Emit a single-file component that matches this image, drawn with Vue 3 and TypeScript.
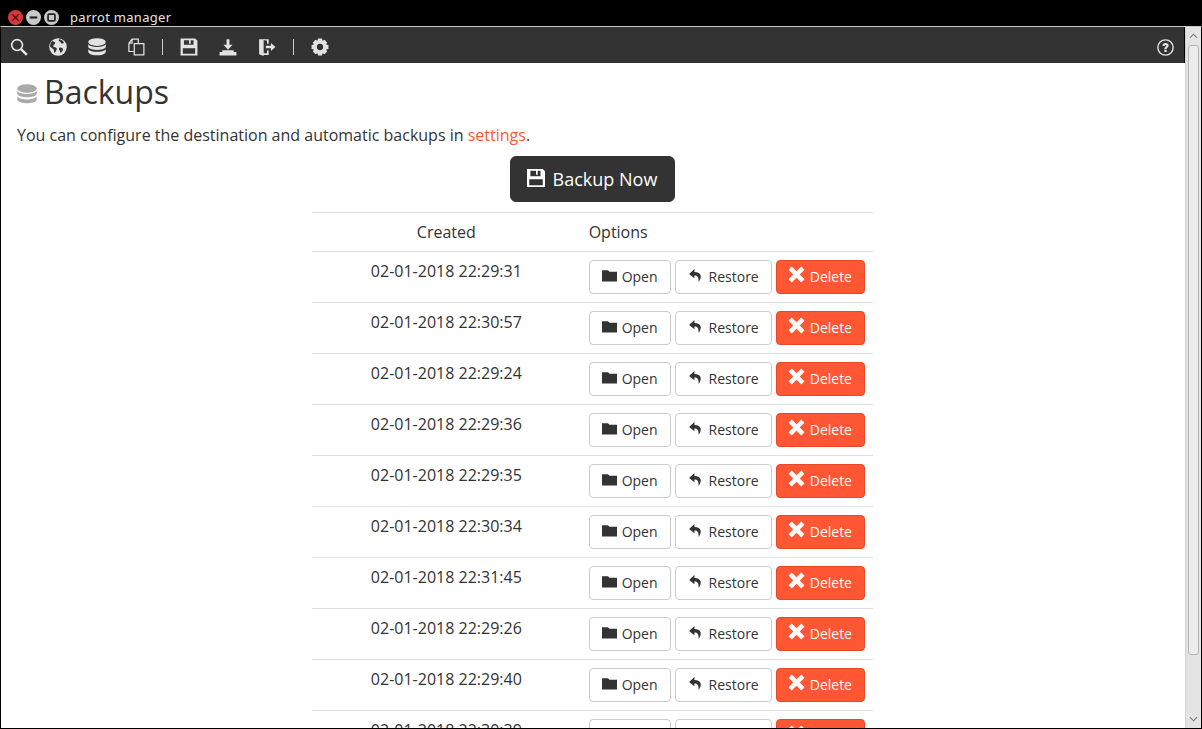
<template>
  <div class="window">
    <div class="titlebar">
      <span class="wbtn close">
        <svg viewBox="0 0 14 14"><path d="M4 4l6 6M10 4l-6 6" stroke="#5a1010" stroke-width="1.4"/></svg>
      </span>
      <span class="wbtn">
        <svg viewBox="0 0 14 14"><path d="M3.5 7h7" stroke="#222" stroke-width="2"/></svg>
      </span>
      <span class="wbtn">
        <svg viewBox="0 0 14 14"><rect x="3.8" y="3.8" width="6.4" height="6.4" rx="1" fill="none" stroke="#222" stroke-width="1.6"/></svg>
      </span>
      <span class="wtitle">parrot manager</span>
    </div>

    <div class="frame">
      <div class="toolbar">
        <!-- search -->
        <svg class="ti" viewBox="0 0 16 16"><circle cx="6.3" cy="6.3" r="4.8" fill="none" stroke="currentColor" stroke-width="1.5"/><path d="M9.800 9.800l5.200 5.200" stroke="currentColor" stroke-width="2.200"/></svg>
        <!-- globe -->
        <svg class="ti" viewBox="0 0 16 16"><circle cx="8" cy="8" r="7.8" fill="currentColor"/><path d="M3 2.600C1.400 4 .8 6 1 8c1 .2 1.600 1.200 2.600 1.800.8.500 1 1.700.9 3 1 .6 1 .2 1.500-1 .5-1 1.400-1.800.8-2.800C6 8 4.500 8.200 3.800 7.500 3.300 6.800 4.500 6 5.200 5 5.800 4.100 5.300 3.300 4.500 3.400zM9 1.200c-.6.800-.4 1.600.6 2 1 .3.700 1.300 1.300 1.700.8.300 1.700-.2 2.400-1C12.300 2.300 10.800 1.300 9 1.200zM9.500 8.500c-.8.400-1 1.500-.2 2.200.5.700.2 1.700.9 2.300 1-.3 2-1.500 2.300-3-.3-1-1.800-1.900-3-1.500z" fill="#333"/></svg>
        <!-- database -->
        <svg class="ti" viewBox="0 0 16 16"><use href="#db-shape"/></svg>
        <!-- copy -->
        <svg class="ti" viewBox="-1 0 16 16"><path d="M0.700 4.500L3.500 1H9V5M0.700 4.500V12H5.500M0.700 4.500H3.500V1" fill="none" stroke="currentColor" stroke-width="1.100"/><path d="M5.500 5H14V15H5.500z" fill="#333" stroke="currentColor" stroke-width="1.100"/></svg>
        <span class="sep"></span>
        <!-- save -->
        <svg class="ti" viewBox="0 0 16 16"><path d="M0.500 0.500H13.500L15.500 2.500V15.500H0.500zM3.500 2V6H12V2H9.500V5H8V2zM2.500 9V14H13.500V9z" fill="currentColor" fill-rule="evenodd"/></svg>
        <!-- download -->
        <svg class="ti" viewBox="0 0 16 16"><path d="M6.700 1H9.300V6H12L8 10.500 4 6H6.700zM3 10.800H13V12.500H15.500V15.500H0.500V12.500H3z" fill="currentColor"/></svg>
        <!-- logout -->
        <svg class="ti" viewBox="0 0 16 16"><path d="M1 1H9.500V5H8V2.500L5 1.800V13.500H8V11H9.500V15H5V16L1 14.500z" fill="currentColor"/><path d="M7 6.800H11.500V4.500L15.500 8 11.500 11.500V9.200H7z" fill="currentColor"/></svg>
        <span class="sep"></span>
        <!-- cog -->
        <svg class="ti" viewBox="0 0 16 16"><path d="M6.300 0.500H9.700L10.200 2.500 12 1.500 14.400 4 13.400 5.700 15.500 6.300V9.700L13.400 10.300 14.400 12 12 14.500 10.200 13.500 9.700 15.500H6.300L5.800 13.500 4 14.500 1.600 12 2.600 10.300 0.500 9.700V6.300L2.600 5.700 1.600 4 4 1.500 5.800 2.500zM8 5.200A2.800 2.800 0 1 0 8 10.800 2.800 2.800 0 1 0 8 5.200z" fill="currentColor" fill-rule="evenodd"/></svg>
        <span class="grow"></span>
        <!-- help -->
        <svg class="help" viewBox="0 0 16 16"><circle cx="8" cy="8" r="7.200" fill="none" stroke="currentColor" stroke-width="1.300"/><path d="M5 6.300C5.100 4.500 6.400 3.700 8 3.700 9.800 3.700 11 4.700 11 6.200 11 8 9.100 8 9.100 9.600H6.900C6.900 7.300 8.800 7.300 8.800 6.400 8.800 6 8.500 5.700 8 5.700 7.500 5.700 7.200 6 7.100 6.600zM6.900 10.300H9.100V12.300H6.900z" fill="currentColor"/></svg>
      </div>

      <div class="viewport">
        <div class="content">
          <h1 class="heading">
            <svg class="h-icon" viewBox="0 0 16 16"><use href="#db-shape"/></svg>
            Backups
          </h1>
          <p class="intro">You can configure the destination and automatic backups in <a class="link">settings</a>.</p>
          <div class="action">
            <button class="btn-lg">
              <svg class="lg-icon" viewBox="0 0 16 16"><path d="M0 0H14L16 2V16H0zM3 1.500V6.500H12V1.500H9.500V5H8V1.500zM2 9V14.500H14V9z" fill="currentColor" fill-rule="evenodd"/></svg>
              Backup Now
            </button>
          </div>
          <table class="table">
            <thead>
              <tr>
                <th class="c-created">Created</th>
                <th class="c-options">Options</th>
              </tr>
            </thead>
            <tbody>
              <tr v-for="d in backups" :key="d">
                <td class="c-created">{{ d }}</td>
                <td class="c-options">
                  <div class="btns">
                    <button class="btn open">
                      <svg class="bi" viewBox="0 0 14 14"><path d="M0 2H5.500L7 3.500H14V12.500H0z" fill="currentColor"/></svg>
                      Open
                    </button>
                    <button class="btn">
                      <svg class="bi" viewBox="0 0 14 14"><path d="M6 1L1 5.500 6 9.500V7C9 7 10 8.500 10 13 13 9 13 3.800 6 3.800z" fill="currentColor"/></svg>
                      Restore
                    </button>
                    <button class="btn danger">
                      <svg class="bi x" viewBox="0 0 16 16"><path d="M3.500 .5L8 5 12.500 .5 15.500 3.500 11 8 15.500 12.500 12.500 15.500 8 11 3.500 15.500 .5 12.500 5 8 .5 3.500z" fill="currentColor"/></svg>
                      Delete
                    </button>
                  </div>
                </td>
              </tr>
            </tbody>
          </table>
        </div>
        <div class="scrollbar">
          <svg class="arrow" viewBox="0 0 10 6"><path d="M1 5l4-4 4 4" fill="none" stroke="#777" stroke-width="1.200"/></svg>
          <div class="thumb"></div>
          <span class="grow"></span>
          <svg class="arrow" viewBox="0 0 10 6"><path d="M1 1l4 4 4-4" fill="none" stroke="#777" stroke-width="1.200"/></svg>
        </div>
      </div>
    </div>

    <svg class="defs" width="0" height="0">
      <defs>
        <g id="db-shape" fill="currentColor">
          <ellipse cx="8" cy="3.600" rx="7.800" ry="3.400"/>
          <path d="M0.200 5.600C1.500 7.400 4.500 8 8 8S14.500 7.400 15.800 5.600V8.200C14.500 10 11.500 10.600 8 10.600S1.500 10 0.200 8.200z"/>
          <path d="M0.200 10C1.500 11.800 4.500 12.300 8 12.300S14.500 11.800 15.800 10V12.600C14.500 14.800 11.500 15.400 8 15.400S1.500 14.800 0.200 12.600z"/>
        </g>
      </defs>
    </svg>
  </div>
</template>

<script setup lang="ts">
const backups: string[] = [
  '02-01-2018 22:29:31',
  '02-01-2018 22:30:57',
  '02-01-2018 22:29:24',
  '02-01-2018 22:29:36',
  '02-01-2018 22:29:35',
  '02-01-2018 22:30:34',
  '02-01-2018 22:31:45',
  '02-01-2018 22:29:26',
  '02-01-2018 22:29:40',
  '02-01-2018 22:30:39',
]
</script>

<style>
html, body { margin: 0; overflow: hidden; background: #000; }
</style>

<style scoped>
.window {
  width: 1202px;
  height: 729px;
  background: #000;
  display: flex;
  flex-direction: column;
  font-family: "Open Sans", "Liberation Sans", sans-serif;
  color: #333;
  overflow: hidden;
}

.titlebar {
  height: 26px;
  flex-shrink: 0;
  display: flex;
  align-items: center;
  padding: 8px 0 0 8px;
  box-sizing: border-box;
  gap: 3px;
}
.wbtn {
  width: 15px;
  height: 15px;
  border-radius: 50%;
  background: #c8c8c8;
  display: block;
}
.wbtn svg { display: block; width: 15px; height: 15px; }
.wbtn.close { background: #d8383c; }
.wtitle {
  margin-left: 8px;
  color: #e4e4e4;
  font-size: 13px;
  font-family: "Noto Sans", "Open Sans", sans-serif;
  letter-spacing: 0.3px;
}

.frame {
  flex: 1;
  min-height: 0;
  display: flex;
  flex-direction: column;
  border-top: 1px solid #c9c9c9;
  border-left: 1px solid #000;
  border-bottom: 1px solid #000;
  border-right: 1px solid #000;
}

.toolbar {
  height: 36px;
  flex-shrink: 0;
  box-sizing: border-box;
  background: #333;
  color: #e3e3e3;
  display: flex;
  align-items: center;
  padding: 4px 10px 0 9px;
  gap: 21px;
  margin-right: 17px;
}
.ti { width: 18px; height: 18px; flex-shrink: 0; }
.sep { width: 1px; height: 16px; background: #ccc; margin: 0 -4px; }
.grow { flex: 1; }
.help { width: 17px; height: 17px; }

.viewport {
  flex: 1;
  min-height: 0;
  display: flex;
}
.content {
  flex: 1;
  min-width: 0;
  background: #fff;
  overflow: hidden;
  padding: 0 16px;
}

.heading {
  margin: 9px 0 0;
  font-size: 32px;
  font-weight: 400;
  line-height: 40px;
  color: #333;
  display: flex;
  align-items: center;
  gap: 7px;
}
.h-icon { width: 20px; height: 20px; color: #a9a9a9; margin-top: 3px; }

.intro { margin: 12px 0 0; font-size: 16px; line-height: 23px; }
.link { color: #ff5733; }

.action {
  display: flex;
  justify-content: center;
  margin-top: 9px;
  padding-right: 2px;
}
.btn-lg {
  height: 46px;
  width: 165px;
  padding: 0;
  background: #333;
  color: #fff;
  border: 1px solid #333;
  border-radius: 6px;
  font: 18px "Open Sans", sans-serif;
  display: flex;
  align-items: center;
  justify-content: center;
  gap: 8px;
}
.lg-icon { width: 18px; height: 18px; margin-top: -3px; }

.table {
  width: 561px;
  margin: 10px 0 0 295px;
  border-collapse: collapse;
  font-size: 16px;
  line-height: 22px;
}
.table th, .table td {
  border-top: 1px solid #ddd;
  padding: 8px;
  font-weight: 400;
  vertical-align: top;
}
.c-created { text-align: center; }
.c-options { text-align: left; }
.table th.c-created, .table td.c-created { width: 253px; }
.table th.c-options, .table td.c-options { width: 276px; }

.btns { display: flex; gap: 4px; }
.btn {
  height: 34px;
  box-sizing: border-box;
  background: #fff;
  color: #333;
  border: 1px solid #ccc;
  border-radius: 4px;
  padding: 0 12px 2px;
  font: 14px "Open Sans", sans-serif;
  display: flex;
  align-items: center;
  gap: 6px;
}
.btn.open { gap: 5px; }
.bi { width: 15px; height: 15px; margin-top: -2px; }
.bi.x { width: 17px; height: 17px; margin: -3px -1px 0 -1px; }
.danger { background: #ff5733; border-color: #e8482a; color: #fff; }

.scrollbar {
  width: 16px;
  flex-shrink: 0;
  margin-top: -36px;
  background: #e4e4e4;
  border-left: 1px solid #d0d0d0;
  box-sizing: border-box;
  display: flex;
  flex-direction: column;
  align-items: center;
}
.arrow { width: 9px; height: 6px; margin: 6px 0; flex-shrink: 0; }
.thumb {
  width: 11px;
  height: 610px;
  background: #ececec;
  border: 1px solid #b5b5b5;
  border-radius: 3px;
  box-sizing: border-box;
}
.defs { position: absolute; }
</style>
